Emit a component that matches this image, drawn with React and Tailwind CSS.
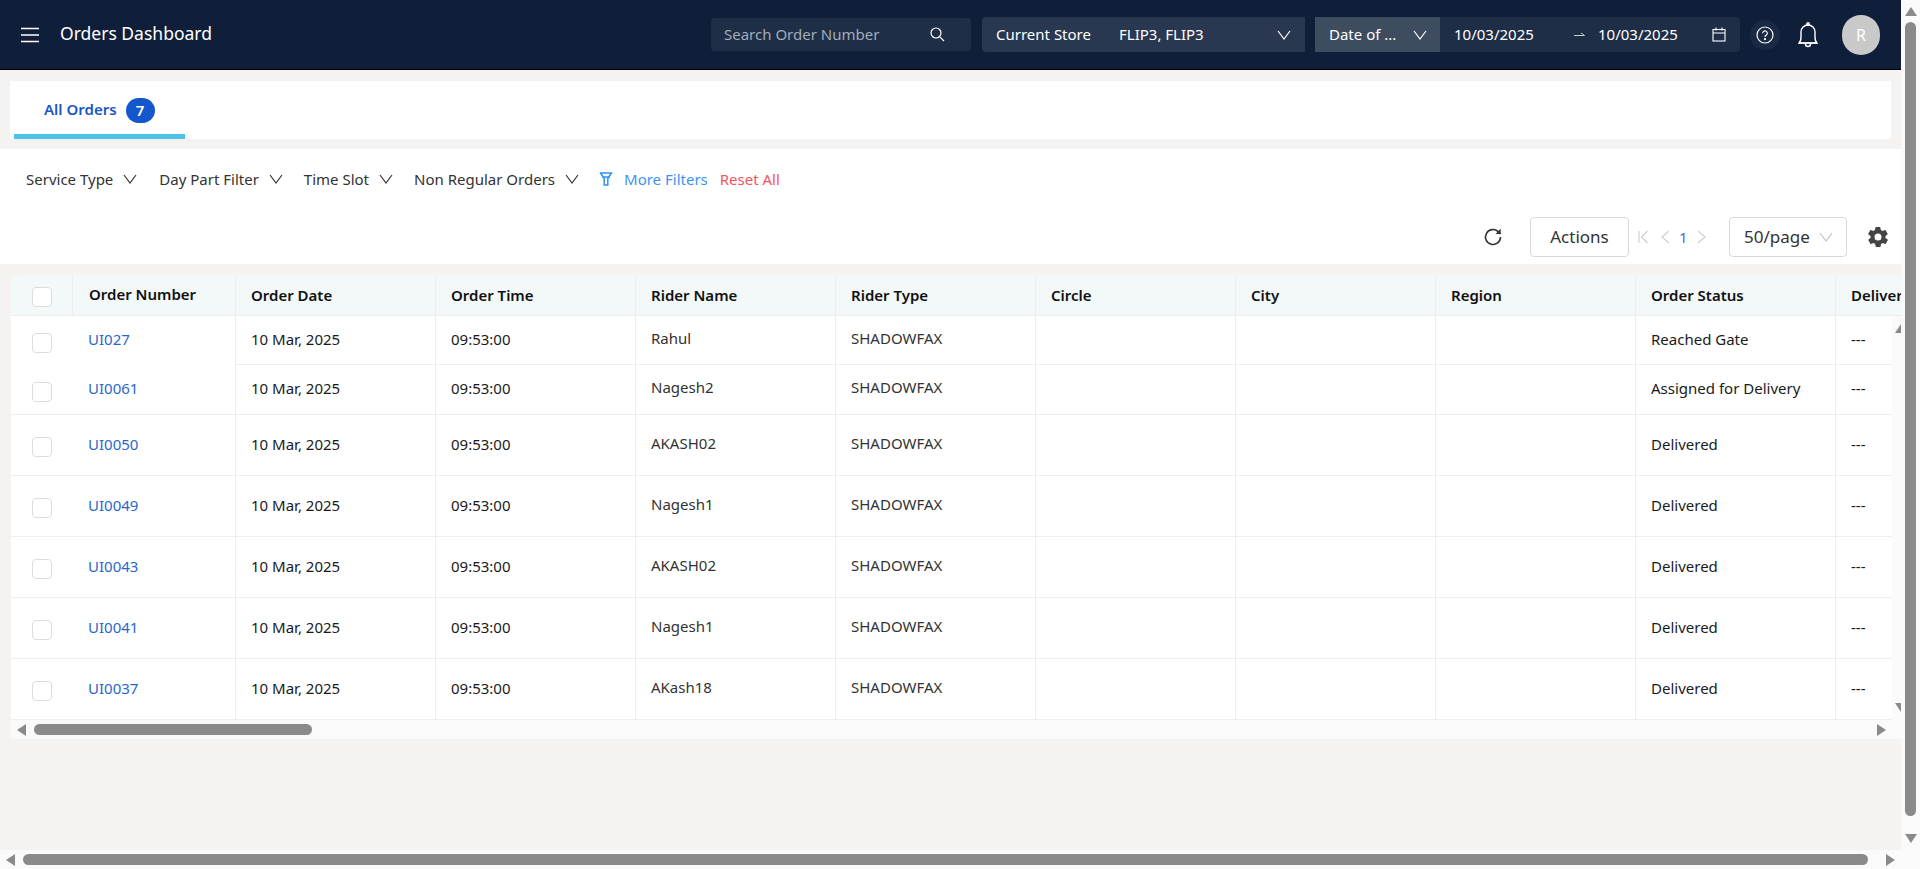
import React from 'react';

const font = { fontFamily: '"Noto Sans", sans-serif' };

const columns = ['Order Date', 'Order Time', 'Rider Name', 'Rider Type', 'Circle', 'City', 'Region', 'Order Status', 'Delivery'];

const orders = [
  { id: 'UI027', rider: 'Rahul', status: 'Reached Gate', rowClass: 'h-[49px]', noLine: true },
  { id: 'UI0061', rider: 'Nagesh2', status: 'Assigned for Delivery', rowClass: 'h-[50px]' },
  { id: 'UI0050', rider: 'AKASH02', status: 'Delivered', rowClass: 'h-[61px]' },
  { id: 'UI0049', rider: 'Nagesh1', status: 'Delivered', rowClass: 'h-[61px]' },
  { id: 'UI0043', rider: 'AKASH02', status: 'Delivered', rowClass: 'h-[61px]' },
  { id: 'UI0041', rider: 'Nagesh1', status: 'Delivered', rowClass: 'h-[61px]' },
  { id: 'UI0037', rider: 'AKash18', status: 'Delivered', rowClass: 'h-[61px]' },
];

function Chevron({ className = 'text-[#333]', size = 14 }) {
  return (
    <svg width={size} height={size} viewBox="0 0 14 14" fill="none" stroke="currentColor" strokeWidth="1.2" className={className}>
      <path d="M1 3l6 8 6-8" />
    </svg>
  );
}

function Arrow({ dir }) {
  const shapes = {
    left: 'M9 0v12L0 6z',
    right: 'M0 0v12l9-6z',
    up: 'M0 9h12L6 0z',
    down: 'M0 0h12L6 9z',
  };
  const vertical = dir === 'up' || dir === 'down';
  return (
    <svg width={vertical ? 12 : 9} height={vertical ? 9 : 12} viewBox={vertical ? '0 0 12 9' : '0 0 9 12'} fill="#8a8a8a" className="shrink-0">
      <path d={shapes[dir]} />
    </svg>
  );
}

function Checkbox() {
  return <span className="block w-5 h-5 rounded-[4px] bg-white border border-[#dcdcdc]" />;
}

function Filter({ label, gap }) {
  return (
    <div className={`flex items-center gap-[10px] ${gap}`}>
      <span>{label}</span>
      <Chevron />
    </div>
  );
}

function TopBar() {
  return (
    <header className="h-[70px] shrink-0 bg-[#0f1f3a] border-b border-black flex items-center text-white text-[15px]">
      <svg width="18" height="16" viewBox="0 0 18 16" stroke="#fff" strokeWidth="1.4" className="ml-[21px]">
        <path d="M0 1.5h18M0 8h18M0 14.5h18" />
      </svg>
      <h1 className="ml-[21px] text-[17.5px] leading-6 w-[500px] pb-1">Orders Dashboard</h1>
      <div className="ml-[151px] w-[260px] h-[33px] rounded-[4px] bg-[#1f2e47] flex items-center pl-[13px] text-[#a3abb8]">
        <span className="w-[206px]">Search Order Number</span>
        <svg width="15" height="15" viewBox="0 0 15 15" fill="none" stroke="#fff" strokeWidth="1.2">
          <circle cx="6" cy="6" r="5" />
          <path d="M9.8 9.8L14 14" />
        </svg>
      </div>
      <div className="ml-[11px] w-[323px] h-[35px] rounded-l-[4px] bg-[#293750] flex items-center pl-[14px]">
        <span className="w-[123px]">Current Store</span>
        <span className="w-[158px]">FLIP3, FLIP3</span>
        <Chevron className="text-white" />
      </div>
      <div className="ml-[10px] w-[125px] h-[35px] bg-[#3e4c60] flex items-center pl-[14px]">
        <span className="w-[84px]">Date of ...</span>
        <Chevron className="text-white" />
      </div>
      <div className="w-[300px] h-[35px] rounded-r-[4px] bg-[#1f2e47] flex items-center pl-[14px]">
        <span className="w-[120px]">10/03/2025</span>
        <svg width="11" height="5" viewBox="0 0 11 5" stroke="#c8ccd3" strokeWidth="1" fill="none">
          <path d="M0 3.5h10.5M7 1l3.5 2.5" />
        </svg>
        <span className="ml-[13px] w-[114px]">10/03/2025</span>
        <svg width="14" height="15" viewBox="0 0 14 15" fill="none" stroke="#fff" strokeWidth="1.1">
          <rect x="1" y="2.5" width="12" height="11.5" />
          <path d="M1 6h12M4 0.5v3M10 0.5v3" />
        </svg>
      </div>
      <div className="ml-[10px] w-[30px] h-[30px] rounded-full bg-[#1a2a44] flex items-center justify-center">
        <svg width="18" height="18" viewBox="0 0 18 18" fill="none" stroke="#fff" strokeWidth="1.2">
          <circle cx="9" cy="9" r="8" />
          <path d="M6.7 7.2a2.3 2.3 0 1 1 3.6 1.9c-.8.5-1.3 1-1.3 1.9" />
          <circle cx="9" cy="13.2" r=".5" fill="#fff" />
        </svg>
      </div>
      <svg width="20" height="26" viewBox="0 0 20 26" fill="none" stroke="#fff" strokeWidth="1.4" className="ml-[18px]">
        <path d="M1 21c2-1.500 2-3.500 2-6V10a7 7 0 0 1 14 0v5c0 2.500 0 4.500 2 6z" />
        <path d="M1 21h18" />
        <circle cx="10" cy="2" r="1.200" />
        <path d="M7.500 22a2.500 2.500 0 0 0 5 0" />
      </svg>
      <div className="ml-[24px] w-[38px] h-[40px] rounded-full bg-[#c9c9c9] flex items-center justify-center text-[16px]">R</div>
    </header>
  );
}

function Tabs() {
  return (
    <div className="ml-[10px] mr-[10px] mt-[11px] h-[58px] bg-white flex flex-col justify-end shrink-0">
      <div className="ml-1 w-[171px] h-[48px] border-b-[5px] border-[#4cc3e8] flex items-start pl-[30px] pt-[7px] gap-[9px]">
        <span className="text-[15px] leading-[23px] font-semibold text-[#1b56c4]">All Orders</span>
        <span className="w-[29px] h-[25px] rounded-full bg-[#1457cc] text-white text-[15px] font-semibold flex items-center justify-center">7</span>
      </div>
    </div>
  );
}

function Toolbar() {
  return (
    <section className="mt-[10px] h-[115px] shrink-0 bg-white flex flex-col text-[15px] text-[#333]">
      <div className="h-[60px] pl-[26px] flex items-center">
        <Filter label="Service Type" gap="mr-[22px]" />
        <Filter label="Day Part Filter" gap="mr-[21px]" />
        <Filter label="Time Slot" gap="mr-[21px]" />
        <Filter label="Non Regular Orders" gap="mr-[20px]" />
        <svg width="14" height="14" viewBox="0 0 14 14" fill="none" stroke="#2e93f5" strokeWidth="1.500">
          <path d="M0.800 1h12.400M1.500 1l3.700 5.500v6.500h3.600V6.500L12.500 1M3 5h8" />
        </svg>
        <span className="ml-[11px] text-[#3d93f7]">More Filters</span>
        <span className="ml-3 text-[#f5535e]">Reset All</span>
      </div>
      <div className="mt-2 flex items-center justify-end pr-[11px] h-[40px]">
        <svg width="20" height="20" viewBox="0 0 20 20" fill="none" stroke="#333" strokeWidth="1.600">
          <path d="M17.500 10a7.500 7.500 0 1 1-2.300-5.400L17.500 7" />
          <path d="M17.700 1.800V7h-5.200" fill="#333" stroke="none" />
        </svg>
        <button className="ml-[27px] w-[99px] h-10 rounded-[4px] border border-[#d9d9d9] text-[17px] text-[#333]">Actions</button>
        <div className="ml-[9px] w-[91px] flex items-center text-[#d0d0d0]">
          <svg width="10" height="14" viewBox="0 0 10 14" fill="none" stroke="currentColor" strokeWidth="1.200">
            <path d="M1 1v12M9.500 1l-6 6 6 6" />
          </svg>
          <svg width="10" height="14" viewBox="0 0 10 14" fill="none" stroke="currentColor" strokeWidth="1.200" className="ml-3">
            <path d="M9 1L2 7l7 6" />
          </svg>
          <span className="ml-[9px] text-[#3f6fd8]">1</span>
          <svg width="10" height="14" viewBox="0 0 10 14" fill="none" stroke="currentColor" strokeWidth="1.200" className="ml-[9px]">
            <path d="M1 1l7 6-7 6" />
          </svg>
        </div>
        <div className="w-[118px] h-10 rounded-[4px] border border-[#d9d9d9] flex items-center pl-[14px] text-[17px] text-[#333]">
          <span className="w-[75px]">50/page</span>
          <Chevron className="text-[#c4c4c4]" />
        </div>
        <svg width="24" height="24" viewBox="0 0 24 24" fill="#444" className="ml-[19px]">
          <path d="M19.400 13a7.500 7.500 0 0 0 0-2l2.100-1.600a.5.5 0 0 0 .1-.6l-2-3.500a.5.5 0 0 0-.6-.2l-2.500 1a7.300 7.300 0 0 0-1.700-1l-.4-2.700a.5.5 0 0 0-.5-.4h-4a.5.5 0 0 0-.5.4l-.4 2.700a7.300 7.300 0 0 0-1.700 1l-2.500-1a.5.5 0 0 0-.6.2l-2 3.500a.5.5 0 0 0 .1.600L4.600 11a7.500 7.500 0 0 0 0 2l-2.100 1.600a.5.5 0 0 0-.1.600l2 3.500a.5.5 0 0 0 .6.2l2.500-1c.5.4 1.100.7 1.700 1l.4 2.700a.5.5 0 0 0 .5.4h4a.5.5 0 0 0 .5-.4l.4-2.700c.6-.3 1.200-.6 1.700-1l2.500 1a.5.5 0 0 0 .6-.2l2-3.500a.5.5 0 0 0-.1-.6zM12 15.500a3.500 3.500 0 1 1 0-7 3.500 3.500 0 0 1 0 7z" />
        </svg>
      </div>
    </section>
  );
}

function OrdersTable() {
  return (
    <section className="ml-[11px] mt-[11px] shrink-0 overflow-hidden text-[15px]">
      <div className="flex h-[41px] bg-[#f3f8f8] border-b border-[#eeeeee] rounded-tl-[8px] font-semibold text-[#111] w-[1900px]">
        <div className="w-[62px] shrink-0 pl-[21px] pt-1 flex items-center border-r border-[#eeeeee]">
          <Checkbox />
        </div>
        <div className="w-[163px] shrink-0 pl-4 pb-[2px] flex items-center border-r border-[#eeeeee] whitespace-nowrap">Order Number</div>
        {columns.map((c) => (
          <div key={c} className="w-[200px] shrink-0 pl-[15px] flex items-center border-r border-[#eeeeee] whitespace-nowrap">{c}</div>
        ))}
      </div>
      <div className="flex">
        <div className="w-[1881px] shrink-0 overflow-hidden bg-white">
          {orders.map((o) => (
            <div key={o.id} className={`flex w-[1900px] ${o.rowClass}`}>
              <div className={`w-[62px] shrink-0 pl-[21px] pt-1 flex items-center ${o.noLine ? '' : 'border-b border-[#eeeeee]'}`}>
                <Checkbox />
              </div>
              <div className={`w-[163px] shrink-0 pl-[15px] pb-[2px] flex items-center text-[#2b66cf] border-r border-[#eeeeee] ${o.noLine ? '' : 'border-b border-b-[#eeeeee]'}`}>
                {o.id}
              </div>
              <Cell>10 Mar, 2025</Cell>
              <Cell>09:53:00</Cell>
              <Cell muted>{o.rider}</Cell>
              <Cell muted>SHADOWFAX</Cell>
              <Cell />
              <Cell />
              <Cell />
              <Cell>{o.status}</Cell>
              <Cell>---</Cell>
            </div>
          ))}
        </div>
        <div className="w-[9px] bg-[#fafafa] flex flex-col justify-between overflow-hidden py-[8px] pl-[3px]">
          <Arrow dir="up" />
          <Arrow dir="down" />
        </div>
      </div>
      <div className="h-[19px] bg-[#fafafa] flex items-center pl-[6px] pr-[15px]">
        <Arrow dir="left" />
        <div className="ml-2 w-[278px] h-[11px] rounded-full bg-[#8a8a8a]" />
        <div className="flex-1" />
        <Arrow dir="right" />
      </div>
    </section>
  );
}

function Cell({ children, muted }) {
  return (
    <div className={`w-[200px] shrink-0 pl-[15px] flex items-center border-r border-b border-[#eeeeee] whitespace-nowrap ${muted ? 'text-[#333] pb-[4px]' : 'text-[#1a1a1a] pb-[2px]'}`}>
      {children}
    </div>
  );
}

export default function App() {
  return (
    <div className="w-[1920px] h-[869px] overflow-hidden flex flex-col bg-[#fafafa]" style={font}>
      <div className="flex h-[850px] shrink-0">
        <main className="w-[1901px] shrink-0 flex flex-col bg-[#f4f3f2] overflow-hidden">
          <TopBar />
          <Tabs />
          <Toolbar />
          <OrdersTable />
        </main>
        <div className="flex-1 flex flex-col items-center py-[7px]">
          <Arrow dir="up" />
          <div className="mt-[6px] w-[11px] flex-1 rounded-full bg-[#8a8a8a]" />
          <div className="mt-[18px]"><Arrow dir="down" /></div>
        </div>
      </div>
      <div className="h-[19px] flex items-center pl-[6px] pr-[25px]">
        <Arrow dir="left" />
        <div className="ml-2 flex-1 h-[11px] rounded-full bg-[#8a8a8a]" />
        <div className="ml-[18px]"><Arrow dir="right" /></div>
      </div>
    </div>
  );
}
